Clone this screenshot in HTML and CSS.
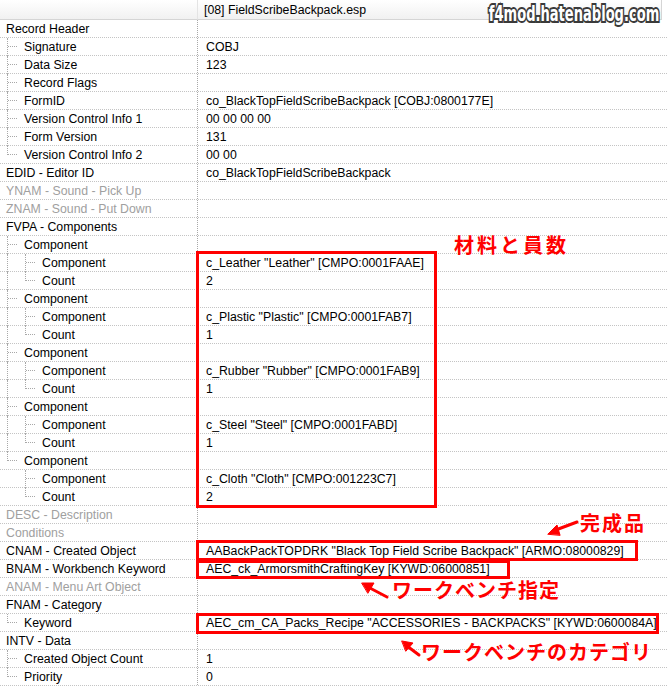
FILE: index.html
```html
<!DOCTYPE html>
<html lang="ja">
<head>
    <meta charset="UTF-8">
    <title>[08] FieldScribeBackpack.esp</title>
    <link rel="stylesheet" href="styles.css">
</head>
<body>
    <div class="sheet">
        <div class="head">
            <div class="head-name"></div>
            <div class="head-file">[08] FieldScribeBackpack.esp</div>
        </div>

        <div class="rows">
            <div class="row"><div class="name"><span>Record Header</span></div><div class="val"></div></div>
            <div class="row"><div class="name"><i class="g tee"></i><span>Signature</span></div><div class="val">COBJ</div></div>
            <div class="row"><div class="name"><i class="g tee"></i><span>Data Size</span></div><div class="val">123</div></div>
            <div class="row"><div class="name"><i class="g tee"></i><span>Record Flags</span></div><div class="val"></div></div>
            <div class="row"><div class="name"><i class="g tee"></i><span>FormID</span></div><div class="val">co_BlackTopFieldScribeBackpack [COBJ:0800177E]</div></div>
            <div class="row"><div class="name"><i class="g tee"></i><span>Version Control Info 1</span></div><div class="val">00 00 00 00</div></div>
            <div class="row"><div class="name"><i class="g tee"></i><span>Form Version</span></div><div class="val">131</div></div>
            <div class="row"><div class="name"><i class="g end"></i><span>Version Control Info 2</span></div><div class="val">00 00</div></div>
            <div class="row"><div class="name"><span>EDID - Editor ID</span></div><div class="val">co_BlackTopFieldScribeBackpack</div></div>
            <div class="row off"><div class="name"><span>YNAM - Sound - Pick Up</span></div><div class="val"></div></div>
            <div class="row off"><div class="name"><span>ZNAM - Sound - Put Down</span></div><div class="val"></div></div>
            <div class="row"><div class="name"><span>FVPA - Components</span></div><div class="val"></div></div>

            <div class="row"><div class="name"><i class="g tee"></i><span>Component</span></div><div class="val"></div></div>
            <div class="row"><div class="name"><i class="g pipe"></i><i class="g tee"></i><span>Component</span></div><div class="val">c_Leather "Leather" [CMPO:0001FAAE]</div></div>
            <div class="row"><div class="name"><i class="g pipe"></i><i class="g end"></i><span>Count</span></div><div class="val">2</div></div>
            <div class="row"><div class="name"><i class="g tee"></i><span>Component</span></div><div class="val"></div></div>
            <div class="row"><div class="name"><i class="g pipe"></i><i class="g tee"></i><span>Component</span></div><div class="val">c_Plastic "Plastic" [CMPO:0001FAB7]</div></div>
            <div class="row"><div class="name"><i class="g pipe"></i><i class="g end"></i><span>Count</span></div><div class="val">1</div></div>
            <div class="row"><div class="name"><i class="g tee"></i><span>Component</span></div><div class="val"></div></div>
            <div class="row"><div class="name"><i class="g pipe"></i><i class="g tee"></i><span>Component</span></div><div class="val">c_Rubber "Rubber" [CMPO:0001FAB9]</div></div>
            <div class="row"><div class="name"><i class="g pipe"></i><i class="g end"></i><span>Count</span></div><div class="val">1</div></div>
            <div class="row"><div class="name"><i class="g tee"></i><span>Component</span></div><div class="val"></div></div>
            <div class="row"><div class="name"><i class="g pipe"></i><i class="g tee"></i><span>Component</span></div><div class="val">c_Steel "Steel" [CMPO:0001FABD]</div></div>
            <div class="row"><div class="name"><i class="g pipe"></i><i class="g end"></i><span>Count</span></div><div class="val">1</div></div>
            <div class="row"><div class="name"><i class="g end"></i><span>Component</span></div><div class="val"></div></div>
            <div class="row"><div class="name"><i class="g"></i><i class="g tee"></i><span>Component</span></div><div class="val">c_Cloth "Cloth" [CMPO:001223C7]</div></div>
            <div class="row"><div class="name"><i class="g"></i><i class="g end"></i><span>Count</span></div><div class="val">2</div></div>

            <div class="row off"><div class="name"><span>DESC - Description</span></div><div class="val"></div></div>
            <div class="row off"><div class="name"><span>Conditions</span></div><div class="val"></div></div>
            <div class="row"><div class="name"><span>CNAM - Created Object</span></div><div class="val">AABackPackTOPDRK "Black Top Field Scribe Backpack" [ARMO:08000829]</div></div>
            <div class="row"><div class="name"><span>BNAM - Workbench Keyword</span></div><div class="val">AEC_ck_ArmorsmithCraftingKey [KYWD:06000851]</div></div>
            <div class="row off"><div class="name"><span>ANAM - Menu Art Object</span></div><div class="val"></div></div>
            <div class="row"><div class="name"><span>FNAM - Category</span></div><div class="val"></div></div>
            <div class="row"><div class="name"><i class="g end"></i><span>Keyword</span></div><div class="val">AEC_cm_CA_Packs_Recipe "ACCESSORIES - BACKPACKS" [KYWD:0600084A]</div></div>
            <div class="row"><div class="name"><span>INTV - Data</span></div><div class="val"></div></div>
            <div class="row"><div class="name"><i class="g tee"></i><span>Created Object Count</span></div><div class="val">1</div></div>
            <div class="row"><div class="name"><i class="g end"></i><span>Priority</span></div><div class="val">0</div></div>
        </div>

        <!-- red notes drawn over the record view -->
        <div class="box box-parts"></div>
        <div class="box box-cnam"></div>
        <div class="box box-bnam"></div>
        <div class="box box-fnam"></div>

        <div class="note note-parts">材料と員数</div>
        <div class="note note-cnam">完成品</div>
        <div class="note note-bnam">ワークベンチ指定</div>
        <div class="note note-fnam">ワークベンチのカテゴリ</div>

        <svg class="arrows" width="667" height="689" viewBox="0 0 667 689">
            <g stroke="#f00" stroke-width="3" stroke-linecap="round" fill="#f00">
                <line x1="577" y1="522" x2="553" y2="531"/>
                <polygon points="548,534 557,525 560,535" stroke-width="1"/>
                <line x1="387" y1="597" x2="368" y2="587"/>
                <polygon points="362,583 374,583 368,593" stroke-width="1"/>
                <line x1="419" y1="655" x2="407" y2="646"/>
                <polygon points="402,641 413,643 406,651" stroke-width="1"/>
            </g>
        </svg>

        <div class="stamp">f4mod.hatenablog.com</div>
    </div>
</body>
</html>
```

FILE: styles.css
```css
:root {
    --line: #a8a8a8;
    --row-line: #c4c4c4;
    --text: #000;
    --muted: #a0a0a0;
    --mark: #f00;
}

* {
    margin: 0;
    padding: 0;
    box-sizing: border-box;
}

body {
    background-color: #fff;
    color: var(--text);
    font-family: 'Liberation Sans', Arial, sans-serif;
    font-size: 12.3px;
}

.sheet {
    position: relative;
    width: 667px;
    height: 689px;
    overflow: hidden;
}

/* column header */
.head {
    display: grid;
    grid-template-columns: 198px 464px;
    height: 20px;
}

.head > div {
    background: linear-gradient(#ffffff, #f1f1f1);
    border-bottom: 1px solid #d5d5d5;
}

.head-name {
    border-right: 1px solid #e4e4e4;
}

.head-file {
    padding: 1px 0 0 6px;
    line-height: 18px;
    border-right: 1px solid #d5d5d5;
}

/* record rows */
.row {
    display: grid;
    grid-template-columns: 198px 1fr;
    height: 18px;
    border-bottom: 1px dotted var(--row-line);
}

.name {
    display: flex;
    border-right: 1px dotted var(--line);
    white-space: nowrap;
}

.name span {
    margin-left: 6px;
    padding-top: 1px;
    line-height: 16px;
}

.val {
    padding: 1px 0 0 8px;
    line-height: 16px;
    white-space: nowrap;
}

.off .name {
    color: var(--muted);
}

/* tree guides */
.g {
    position: relative;
    flex: none;
    width: 18px;
}

.g.pipe::before,
.g.tee::before,
.g.end::before {
    content: '';
    position: absolute;
    left: 7px;
    top: 0;
    bottom: -1px;
    border-left: 1px dotted var(--line);
}

.g.end::before {
    bottom: auto;
    height: 9px;
}

.g.tee::after,
.g.end::after {
    content: '';
    position: absolute;
    left: 8px;
    top: 8px;
    width: 9px;
    border-top: 1px dotted var(--line);
}

/* red frames */
.box {
    position: absolute;
    border: 3px solid var(--mark);
}

.box-parts {
    left: 196px;
    top: 251px;
    width: 241px;
    height: 257px;
}

.box-cnam {
    left: 196px;
    top: 540px;
    width: 442px;
    height: 21px;
}

.box-bnam {
    left: 196px;
    top: 560px;
    width: 314px;
    height: 19px;
}

.box-fnam {
    left: 196px;
    top: 613px;
    width: 463px;
    height: 21px;
}

.note {
    position: absolute;
    color: var(--mark);
    font-family: 'Noto Sans CJK JP', sans-serif;
    font-size: 20px;
    font-weight: 700;
    line-height: 22px;
    white-space: nowrap;
}

.note-parts {
    left: 454px;
    top: 234px;
    letter-spacing: 3px;
}

.note-cnam {
    left: 580px;
    top: 512px;
    letter-spacing: 2px;
}

.note-bnam {
    left: 392px;
    top: 579px;
    letter-spacing: 1px;
}

.note-fnam {
    left: 421px;
    top: 641px;
    letter-spacing: 1px;
}

.arrows {
    position: absolute;
    left: 0;
    top: 0;
    pointer-events: none;
}

/* blog watermark */
.stamp {
    position: absolute;
    right: 8px;
    top: 3px;
    color: #fff;
    font-family: 'Liberation Sans Narrow', 'DejaVu Sans Condensed', sans-serif;
    font-size: 22px;
    font-weight: bold;
    line-height: 22px;
    -webkit-text-stroke: 4px #3a3a3a;
    paint-order: stroke fill;
    transform: scaleX(0.66);
    transform-origin: right center;
}
```
